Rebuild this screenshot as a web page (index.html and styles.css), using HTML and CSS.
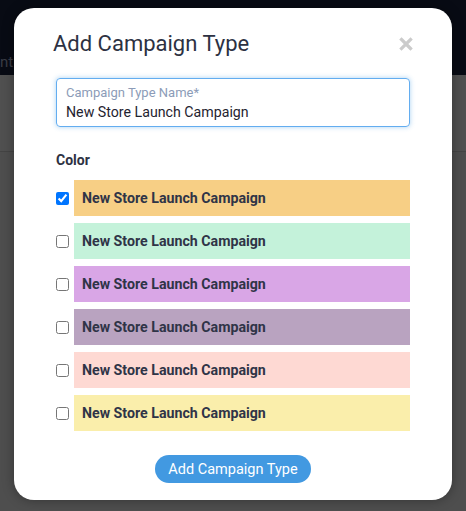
FILE: index.html
```html
<!DOCTYPE html>
<html>
<head>
<meta charset="utf-8">
<link rel="stylesheet" href="styles.css">
</head>
<body>
<div class="page">
  <header class="topbar"><span class="crumb">nt</span></header>
  <div class="content">
    <div class="subbar"></div>
  </div>
</div>
<div class="modal">
  <div class="modal-head">
    <h2 class="title">Add Campaign Type</h2>
    <button class="close" aria-label="Close">
      <svg width="14" height="14" viewBox="0 0 14 14"><path d="M2.5 2.5 L11.5 11.5 M11.5 2.5 L2.5 11.5" stroke="#cbcbcb" stroke-width="3.2" stroke-linecap="square"/></svg>
    </button>
  </div>
  <div class="field">
    <div class="field-label">Campaign Type Name*</div>
    <div class="field-value">New Store Launch Campaign</div>
  </div>
  <div class="section-label">Color</div>
  <div class="colors">
    <label class="row"><input type="checkbox" checked><span class="swatch c1">New Store Launch Campaign</span></label>
    <label class="row"><input type="checkbox"><span class="swatch c2">New Store Launch Campaign</span></label>
    <label class="row"><input type="checkbox"><span class="swatch c3">New Store Launch Campaign</span></label>
    <label class="row"><input type="checkbox"><span class="swatch c4">New Store Launch Campaign</span></label>
    <label class="row"><input type="checkbox"><span class="swatch c5">New Store Launch Campaign</span></label>
    <label class="row"><input type="checkbox"><span class="swatch c6">New Store Launch Campaign</span></label>
  </div>
  <div class="actions">
    <button class="primary">Add Campaign Type</button>
  </div>
</div>
</body>
</html>
```
FILE: styles.css
```css
* { box-sizing: border-box; }
html, body { margin: 0; padding: 0; }
body {
  width: 466px;
  height: 511px;
  overflow: hidden;
  font-family: Roboto, "Liberation Sans", Arial, sans-serif;
  background: #4d4d4d;
  position: relative;
}
.page { height: 511px; display: flex; flex-direction: column; }
.topbar {
  height: 75px;
  background: #080b14;
  display: flex;
  align-items: flex-end;
  padding-bottom: 3px;
  overflow: hidden;
}
.crumb {
  font-size: 15px;
  line-height: 20px;
  color: #3a3d46;
  margin-left: 0;
}
.content { flex: 1; background: #4e4e4e; }
.subbar { height: 77px; border-bottom: 1px solid #444; background: #505050; }

.modal {
  position: absolute;
  left: 14px;
  top: 8px;
  width: 438px;
  height: 492px;
  background: #fff;
  border-radius: 20px;
  box-shadow: 0 0 12px rgba(0,0,0,0.35);
  padding: 24px 42px 17px 42px;
  display: flex;
  flex-direction: column;
}
.modal-head {
  display: flex;
  align-items: center;
  justify-content: space-between;
  height: 24px;
  margin-bottom: 22px;
}
.title {
  margin: 0 0 0 -3px;
  font-size: 22px;
  font-weight: 400;
  line-height: 24px;
  color: #2d3142;
}
.close {
  border: 0;
  background: none;
  padding: 0;
  width: 14px;
  height: 14px;
  margin-right: -3px;
  display: flex;
}
.field {
  height: 49px;
  border: 1px solid #63adf0;
  border-radius: 4px;
  box-shadow: 0 0 5px rgba(66,153,225,0.45);
  padding: 6px 9px 5px 9px;
}
.field-label {
  font-size: 13px;
  line-height: 16px;
  color: #8c9cb8;
}
.field-value {
  font-size: 14.2px;
  line-height: 18px;
  margin-top: 2px;
  color: #1f2330;
}
.section-label {
  margin-top: 25px;
  font-size: 14px;
  font-weight: 700;
  line-height: 16px;
  color: #2d3142;
}
.colors {
  margin-top: 12px;
  display: flex;
  flex-direction: column;
  gap: 7px;
}
.row {
  display: flex;
  align-items: center;
  height: 36px;
}
.row input {
  margin: 0 5px 0 0;
  width: 13px;
  height: 13px;
}
.swatch {
  flex: 1;
  height: 36px;
  display: flex;
  align-items: center;
  padding-left: 8px;
  font-size: 14.2px;
  font-weight: 700;
  color: #2f3447;
}
.c1 { background: #f7cf85; }
.c2 { background: #c4f2da; }
.c3 { background: #d9a6e6; }
.c4 { background: #b9a3c0; }
.c5 { background: #fed9d3; }
.c6 { background: #faeeab; }
.actions {
  margin-top: 24px;
  display: flex;
  justify-content: center;
}
.primary {
  height: 28px;
  padding: 0 13px;
  border: 0;
  border-radius: 14px;
  background: #4299e1;
  color: #fff;
  font-family: Roboto, "Liberation Sans", Arial, sans-serif;
  font-size: 14.5px;
}
```
